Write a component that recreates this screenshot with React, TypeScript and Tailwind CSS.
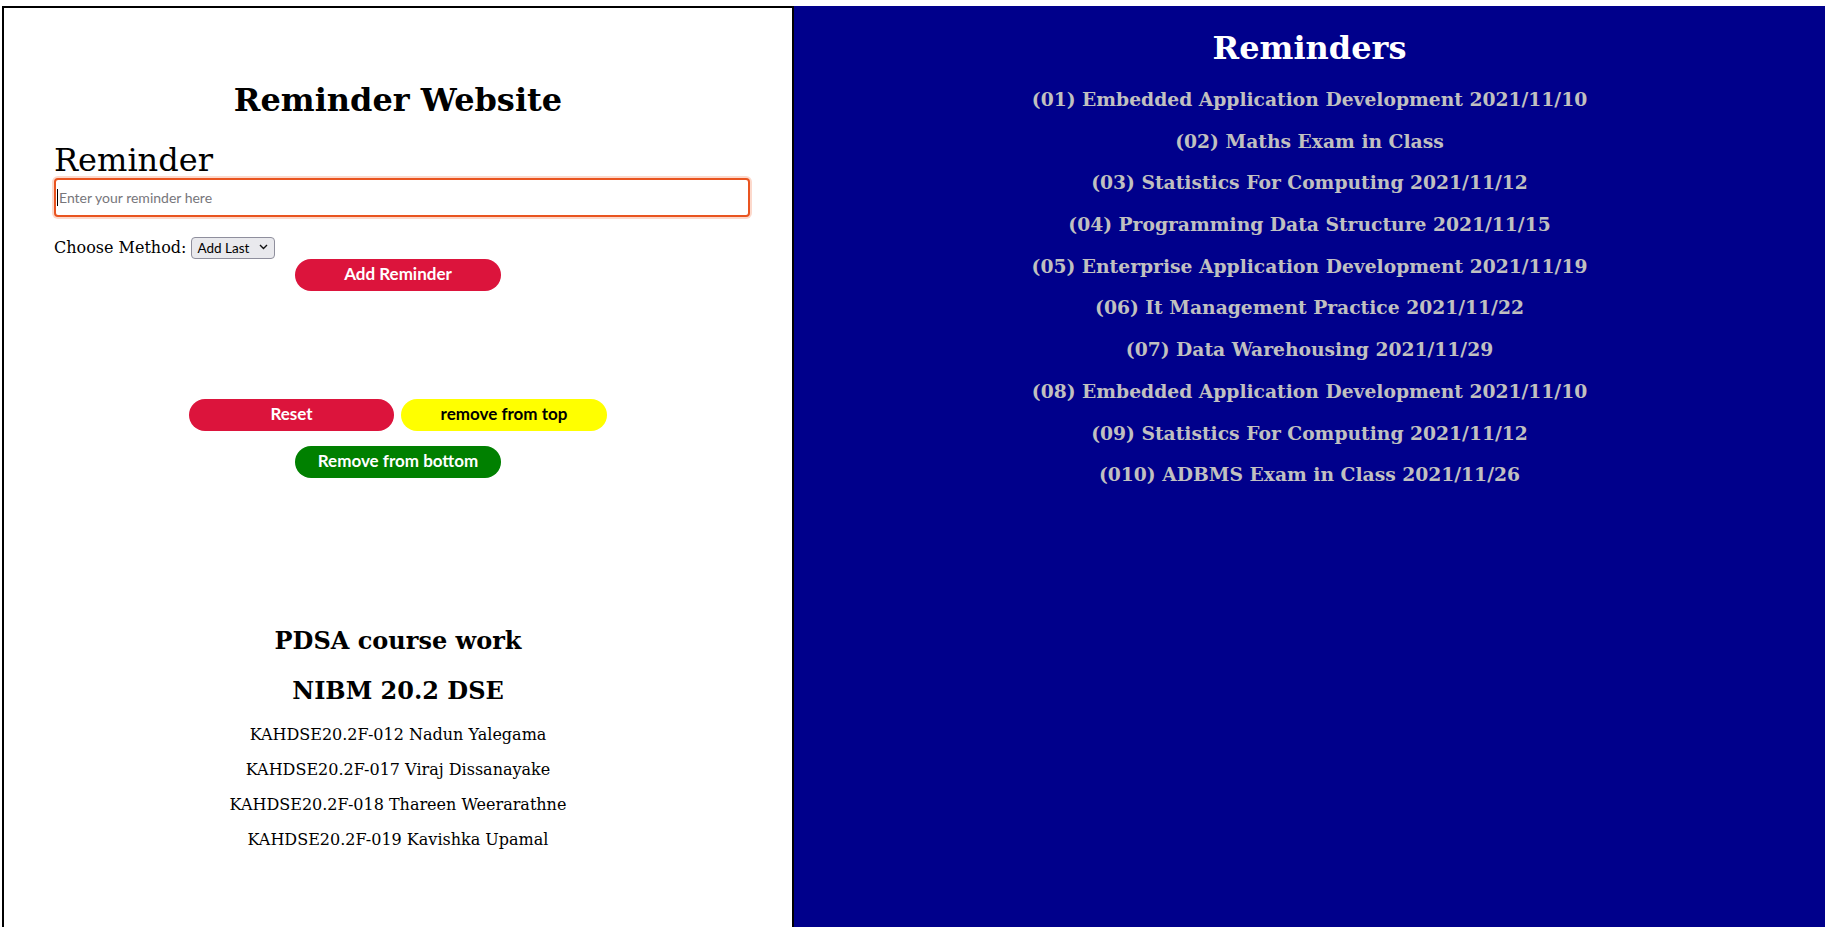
import React from "react";

const serif = { fontFamily: '"DejaVu Serif", serif' };
const sans = { fontFamily: 'Lato, "Noto Sans", sans-serif' };

const reminders = [
  "(01) Embedded Application Development 2021/11/10",
  "(02) Maths Exam in Class",
  "(03) Statistics For Computing 2021/11/12",
  "(04) Programming Data Structure 2021/11/15",
  "(05) Enterprise Application Development 2021/11/19",
  "(06) It Management Practice 2021/11/22",
  "(07) Data Warehousing 2021/11/29",
  "(08) Embedded Application Development 2021/11/10",
  "(09) Statistics For Computing 2021/11/12",
  "(010) ADBMS Exam in Class 2021/11/26",
];

const members = [
  "KAHDSE20.2F-012 Nadun Yalegama",
  "KAHDSE20.2F-017 Viraj Dissanayake",
  "KAHDSE20.2F-018 Thareen Weerarathne",
  "KAHDSE20.2F-019 Kavishka Upamal",
];

export default function App() {
  return (
    <div className="flex h-[927px] w-[1832px] overflow-hidden bg-white pt-[6px] pl-[2px] pr-[7px]" style={serif}>
      {/* Left panel */}
      <div className="flex w-[792px] shrink-0 flex-col border-x-2 border-t-2 border-black text-black">
        <h1 className="mt-[74px] text-center text-[32px] font-bold leading-[37px]">Reminder Website</h1>
        <div className="ml-[50px] mt-[23px] text-[32px] leading-[36px]">Reminder</div>
        <div className="relative ml-[50px] h-[39px] w-[696px]">
          <input
            type="text"
            placeholder="Enter your reminder here"
            className="h-full w-full rounded-[4px] border-2 border-[#e95420] bg-white px-[3px] text-[14px] text-black shadow-[0_0_0_2px_#fcd9cc] outline-none placeholder:text-[#77767b]"
            style={sans}
          />
          <span className="absolute left-[3px] top-[11px] h-[17px] w-px bg-black" />
        </div>
        <div className="ml-[50px] mt-[19px] flex h-[22px] items-center">
          <span className="text-[16px] leading-[19px]">Choose Method:</span>
          <div className="relative ml-[5px] h-[22px] w-[84px]">
            <select
              className="h-full w-full appearance-none rounded-[4px] border border-[#8f8f9d] bg-[#e9e9ed] pl-[5px] text-[13.5px] text-black"
              style={sans}
              defaultValue="last"
            >
              <option value="last">Add Last</option>
              <option value="first">Add First</option>
            </select>
            <svg className="pointer-events-none absolute right-[7px] top-[8px]" width="9" height="6" viewBox="0 0 9 6">
              <path d="M1 1 L4.5 4.5 L8 1" fill="none" stroke="#111" strokeWidth="1.4" />
            </svg>
          </div>
        </div>
        <button
          className="mx-auto mt-[1px] flex h-[32px] w-[206px] items-center justify-center rounded-full bg-[#dc143c] pb-[2px] text-[17px] font-bold text-white"
          style={sans}
        >
          Add Reminder
        </button>
        <div className="mt-[108px] flex justify-center gap-[7px]">
          <button
            className="flex h-[32px] w-[205px] items-center justify-center rounded-full bg-[#dc143c] pb-[2px] text-[17px] font-bold text-white"
            style={sans}
          >
            Reset
          </button>
          <button
            className="flex h-[32px] w-[206px] items-center justify-center rounded-full bg-[#ffff00] pb-[2px] text-[17px] font-bold text-black"
            style={sans}
          >
            remove from top
          </button>
        </div>
        <button
          className="mx-auto mt-[15px] flex h-[32px] w-[206px] items-center justify-center rounded-full bg-[#008000] pb-[2px] text-[17px] font-bold text-white"
          style={sans}
        >
          Remove from bottom
        </button>
        <h2 className="mt-[149px] text-center text-[24px] font-bold leading-[28px]">PDSA course work</h2>
        <h2 className="mt-[22px] text-center text-[24px] font-bold leading-[28px]">NIBM 20.2 DSE</h2>
        <div className="mt-[20px] flex flex-col gap-[16px]">
          {members.map((m) => (
            <p key={m} className="text-center text-[16px] leading-[19px]">
              {m}
            </p>
          ))}
        </div>
      </div>
      {/* Right panel */}
      <div className="flex flex-1 flex-col items-center bg-[#00008b] pt-[24px]">
        <h1 className="text-center text-[32px] font-bold leading-[37px] text-white">Reminders</h1>
        <div className="mt-[21px] flex flex-col items-center gap-[19.7px]">
          {reminders.map((r, i) => (
            <h3 key={i} className="text-center text-[18.72px] font-bold leading-[22px] text-[#c0c0c0]">
              {r}
            </h3>
          ))}
        </div>
      </div>
    </div>
  );
}
